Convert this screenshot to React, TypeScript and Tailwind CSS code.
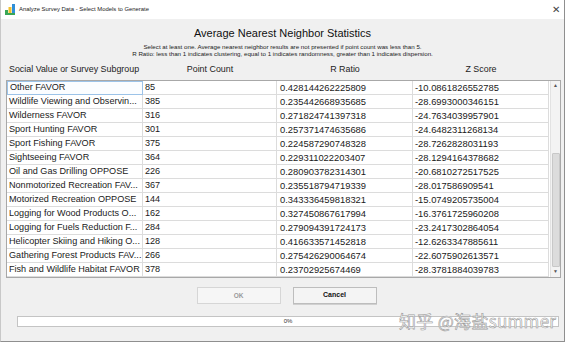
import React from "react";

const rows: [string, string, string, string][] = [
  ["Other FAVOR", "85", "0.428144262225809", "-10.0861826552785"],
  ["Wildlife Viewing and Observin...", "385", "0.235442668935685", "-28.6993000346151"],
  ["Wilderness FAVOR", "316", "0.271824741397318", "-24.7634039957901"],
  ["Sport Hunting FAVOR", "301", "0.257371474635686", "-24.6482311268134"],
  ["Sport Fishing FAVOR", "375", "0.224587290748328", "-28.7262828031193"],
  ["Sightseeing FAVOR", "364", "0.229311022203407", "-28.1294164378682"],
  ["Oil and Gas Drilling OPPOSE", "226", "0.280903782314301", "-20.6810272517525"],
  ["Nonmotorized Recreation FAV...", "367", "0.235518794719339", "-28.017586909541"],
  ["Motorized Recreation OPPOSE", "144", "0.343336459818321", "-15.0749205735004"],
  ["Logging for Wood Products O...", "162", "0.327450867617994", "-16.3761725960208"],
  ["Logging for Fuels Reduction F...", "284", "0.279094391724173", "-23.2417302864054"],
  ["Helicopter Skiing and Hiking O...", "128", "0.416633571452818", "-12.6263347885611"],
  ["Gathering Forest Products FAV...", "266", "0.275426290064674", "-22.6075902613571"],
  ["Fish and Wildlife Habitat FAVOR", "378", "0.23702925674469", "-28.3781884039783"],
];

const AppIcon = () => (
  <svg width="11" height="11" viewBox="0 0 11 11">
    <rect x="0" y="6" width="3" height="5" fill="#3aa655" />
    <rect x="3.5" y="3" width="3" height="8" fill="#f2c12e" />
    <rect x="7" y="0" width="3" height="11" fill="#2f8fd8" />
    <rect x="0" y="9" width="10" height="2" fill="#3aa655" />
  </svg>
);

const App = () => {
  return (
    <div className="w-[567px] h-[344px] bg-white relative overflow-hidden font-['Liberation_Sans',Arial,sans-serif] text-[#1a1a1a]">
      <div className="w-[565px] h-[342px] bg-[#f0f0f0] border border-t-0 border-l-[#c8c8c8] border-r-[#8f8f8f] border-b-[#8f8f8f] flex flex-col">
        {/* Title bar */}
        <div className="h-[19px] bg-white flex items-center pl-[4px] pr-[4px] shrink-0">
          <AppIcon />
          <span className="ml-[3px] text-[5.9px] text-[#222]">Analyze Survey Data - Select Models to Generate</span>
          <span className="ml-auto text-[10px] leading-none text-[#444] font-light">✕</span>
        </div>

        {/* Heading */}
        <div className="text-center text-[11px] leading-[14px] mt-[7px] text-[#111]">Average Nearest Neighbor Statistics</div>
        <div className="text-center text-[6.2px] leading-[7px] mt-[3px] text-[#222]">
          Select at least one. Average nearest neighbor results are not presented if point count was less than 5.
        </div>
        <div className="text-center text-[6.2px] leading-[7px] text-[#222]">
          R Ratio: less than 1 indicates clustering, equal to 1 indicates randomness, greater than 1 indicates dispersion.
        </div>

        {/* Column headers */}
        <div className="grid grid-cols-[136px_134px_136px_136px] ml-[6px] mt-[6px] h-[12px] items-center text-[8.9px] text-[#222]">
          <div className="pl-[2px] whitespace-nowrap">Social Value or Survey Subgroup</div>
          <div className="text-center">Point Count</div>
          <div className="text-center">R Ratio</div>
          <div className="text-center">Z Score</div>
        </div>

        {/* Table */}
        <div className="ml-[5px] mt-[5px] w-[555px] border border-[#a8a8a8] bg-white flex">
          <div className="flex flex-col">
            {rows.map((r, i) => (
              <div key={i} className="grid grid-cols-[136px_134px_136px_136px] h-[14px] text-[9.1px] leading-[13px]">
                <div className={`pl-[2px] whitespace-nowrap overflow-hidden border-b border-r ${i === 0 ? "border-[#9cc3e8] border-t border-l bg-[#fbfdff] leading-[11px]" : "border-[#dcdcdc]"}`}>{r[0]}</div>
                <div className="pl-[2px] border-b border-r border-[#dcdcdc]">{r[1]}</div>
                <div className="pl-[3px] border-b border-r border-[#dcdcdc] text-[9.4px] whitespace-nowrap">{r[2]}</div>
                <div className="pl-[2px] border-b border-r border-[#dcdcdc] text-[9.4px] whitespace-nowrap">{r[3]}</div>
              </div>
            ))}
          </div>
          {/* Scrollbar */}
          <div className="w-[11px] ml-[1px] bg-[#f3f3f3] border-l border-[#e2e2e2] flex flex-col items-center">
            <div className="h-[10px] flex items-center justify-center text-[5px] text-[#555]">▲</div>
            <div className="w-[7px] h-[62px]"></div>
            <div className="w-[8px] flex-1 bg-[#dcdcdc] border border-[#c8c8c8] rounded-[1px]"></div>
            <div className="h-[10px] flex items-center justify-center text-[5px] text-[#555]">▼</div>
          </div>
        </div>

        {/* Buttons */}
        <div className="flex justify-center gap-[12px] mt-[9px] ml-[8px]">
          <div className="w-[84px] h-[17px] border border-[#d6d6d6] bg-[#f6f6f6] flex items-center justify-center text-[6.5px] text-[#9a9a9a] font-bold">OK</div>
          <div className="w-[84px] h-[17px] border border-[#bdbdbd] bg-[#f4f4f4] shadow-[0_1px_0_#d0d0d0] flex items-center justify-center text-[7px] font-bold text-[#111]">Cancel</div>
        </div>

        {/* Progress */}
        <div className="ml-[16px] mt-[12px] w-[542px] h-[11px] border border-[#c4c4c4] bg-white flex items-center justify-center text-[6px] text-[#333]">0%</div>
      </div>

      {/* Watermark */}
      <div className="absolute left-[399px] top-[311px] text-[17px] leading-[20px] text-white font-['Noto_Sans_CJK_SC',sans-serif] [-webkit-text-stroke:0.6px_#9a9a9a] tracking-[0.3px]">
        知乎 @海盐summer
      </div>
    </div>
  );
};

export default App;
